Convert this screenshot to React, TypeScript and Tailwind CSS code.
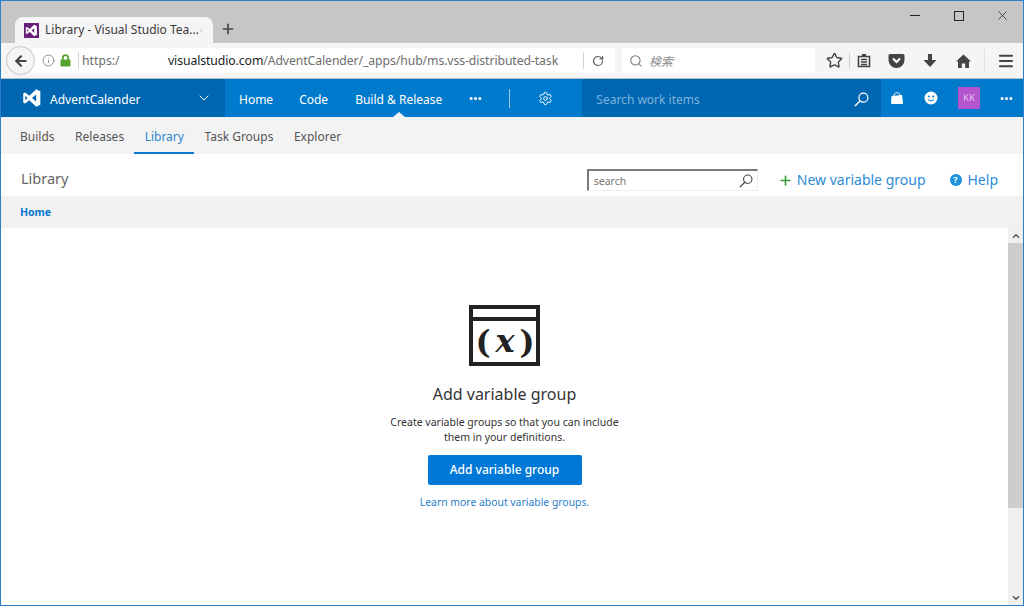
import React from 'react';
import { ArrowLeft, ChevronDown, ChevronUp, Info, Menu, MoreHorizontal, Plus, RotateCw, Search, Settings, Star, X } from 'lucide-react';

const FONT = "font-['Noto_Sans','Open_Sans',sans-serif]";

const VsLogo = ({ size, color }: { size: number; color: string }) => (
  <svg width={size} height={size} viewBox="0 0 24 24">
    <path
      fill={color}
      fillRule="evenodd"
      d="M17 1.500 22 4v16l-5 2.500-8.200-7.900L3.700 18.500 1.500 17.400V6.600l2.200-1.100 5.100 3.900ZM17 7.800l-5 4.200 5 4.200ZM3.900 9.200v5.600L6.600 12Z"
    />
  </svg>
);

// lens top right, long handle to bottom left
const Magnifier = ({ size, color }: { size: number; color: string }) => (
  <svg width={size} height={size} viewBox="0 0 16 16">
    <circle cx="10" cy="6" r="4.800" fill="none" stroke={color} strokeWidth="1.300" />
    <path d="M6.600 9.400 1 15" fill="none" stroke={color} strokeWidth="1.500" />
  </svg>
);

const subTabs = ['Builds', 'Releases', 'Library', 'Task Groups', 'Explorer'];

function BrowserChrome() {
  return (
    <>
      <div className="h-[42px] bg-[#c6c6c6] flex items-end relative">
        <div className="ml-[14px] w-[198px] h-[26px] bg-[#f5f5f5] rounded-t-[8px] flex items-center pl-[9px] pr-[10px]">
          <div className="w-[15px] h-[15px] bg-[#68217a] flex items-center justify-center shrink-0">
            <VsLogo size={13} color="#ffffff" />
          </div>
          <span className="ml-[6px] text-[12px] text-[#3a3a3a] whitespace-nowrap flex-1">Library - Visual Studio Tea...</span>
          <X size={13} strokeWidth={1.2} className="text-[#555]" />
        </div>
        <Plus size={16} strokeWidth={2.4} className="ml-[7px] mb-[6px] text-[#444]" />
        <div className="absolute right-0 top-[7px] flex items-center text-[#222]">
          <div className="w-[10px] h-[1.500px] bg-[#222] mr-[34px]" />
          <div className="w-[10px] h-[10px] border border-[#222] mr-[31px]" />
          <X size={15} strokeWidth={1.2} className="mr-[13px]" />
        </div>
      </div>
      <div className="h-[36px] bg-[#f5f5f5] border-b border-[#bdbdbd] flex items-center">
        <div className="ml-[5px] w-[29px] h-[29px] rounded-full border border-[#c4c4c4] bg-[#f5f5f5] flex items-center justify-center z-10 shrink-0">
          <ArrowLeft size={16} strokeWidth={3.2} className="text-[#444]" />
        </div>
        <div className="-ml-[3px] w-[583px] h-[25px] bg-white flex items-center pl-[10px] shrink-0">
          <Info size={13} strokeWidth={1.5} className="text-[#777]" />
          <svg width="11" height="13" viewBox="0 0 11 13" className="ml-[5px]">
            <path fill="none" stroke="#57a130" strokeWidth="1.800" d="M2.800 6V3.800a2.700 2.700 0 0 1 5.400 0V6" />
            <rect x="0.500" y="5.500" width="10" height="7" rx="1" fill="#57a130" />
          </svg>
          <div className="ml-[7px] w-px h-[17px] bg-[#d4d4d4]" />
          <span className="ml-[3px] pt-[2px] text-[12.250px] text-[#6e6e6e] whitespace-nowrap w-[86px]">https:/</span>
          <span className="pt-[2px] text-[12.250px] text-[#6e6e6e] whitespace-nowrap flex-1 tracking-[-0.1px]">
            <span className="text-[#222]">visualstudio.com</span>/AdventCalender/_apps/hub/ms.vss-distributed-task
          </span>
          <div className="w-px h-[17px] bg-[#d4d4d4]" />
          <RotateCw size={12} strokeWidth={2.4} className="ml-[8px] mr-[11px] text-[#555]" />
        </div>
        <div className="ml-[7px] w-[193px] h-[25px] bg-white flex items-center pl-[7px] shrink-0">
          <Search size={14} strokeWidth={1.8} className="text-[#777]" />
          <span className="ml-[6px] text-[12px] italic text-[#8a8a8a] font-['Noto_Sans_CJK_JP',sans-serif]">検索</span>
        </div>
        <Star size={17} strokeWidth={2} className="ml-[11px] text-[#444]" />
        <div className="ml-[6px] w-px h-[15px] bg-[#ccc]" />
        <svg width="14" height="15" viewBox="0 0 14 15" className="ml-[7px] text-[#444]">
          <path fill="none" stroke="currentColor" strokeWidth="1.600" d="M1.500 3.500h11v10h-11zM4 6.500h6M4 9h6M4 11.500h6" />
          <rect x="5" y="1" width="4" height="3" fill="currentColor" />
        </svg>
        <svg width="17" height="15" viewBox="0 0 17 15" className="ml-[17px]">
          <path fill="#444" d="M2 1h13a1.500 1.500 0 0 1 1.500 1.500V7a8 8 0 0 1-16 0V2.500A1.500 1.500 0 0 1 2 1Z" />
          <path fill="none" stroke="#fff" strokeWidth="2" d="m5 5.500 3.500 3.500L12 5.500" />
        </svg>
        <svg width="14" height="15" viewBox="0 0 14 15" className="ml-[18px]">
          <path fill="#444" d="M5 1h4v6h4.500L7 14 .500 7H5Z" />
        </svg>
        <svg width="15" height="14" viewBox="0 0 15 14" className="ml-[19px]">
          <path fill="#444" d="M7.500.500 15 7.500h-2V14H9.200V9.500H5.800V14H2V7.500H0Z" />
        </svg>
        <div className="ml-[13px] w-px h-[24px] bg-[#e4e4e4]" />
        <Menu size={18} strokeWidth={2.8} className="ml-[12px] text-[#444]" />
      </div>
    </>
  );
}

function TopNav() {
  return (
    <div className="h-[38px] bg-[#007acc] flex items-center text-white text-[12px]">
      <div className="w-[224px] h-full bg-[#0066b1] flex items-center pl-[21px] shrink-0">
        <VsLogo size={20} color="#ffffff" />
        <span className="ml-[8px] pt-[3px] flex-1">AdventCalender</span>
        <ChevronDown size={16} strokeWidth={1.5} className="mr-[13px]" />
      </div>
      <span className="ml-[14px] pt-[3px]">Home</span>
      <span className="ml-[26px] pt-[3px]">Code</span>
      <div className="ml-[27px] h-full flex items-center relative">
        <span className="pt-[3px]">Build &amp; Release</span>
        <div className="absolute bottom-0 left-[38px] w-0 h-0 border-x-[6px] border-x-transparent border-b-[5px] border-b-[#f3f3f3]" />
      </div>
      <MoreHorizontal size={15} strokeWidth={3} className="ml-[26px]" />
      <div className="ml-[26px] w-px h-[19px] bg-[#9ccbe9]" />
      <Settings size={15} strokeWidth={1.6} className="ml-[28px]" />
      <div className="ml-[29px] w-[299px] h-full bg-[#0066b1] flex items-center pl-[14px] pr-[12px] shrink-0">
        <span className="flex-1 pt-[3px] text-[#7db4dc]">Search work items</span>
        <div className="mt-[3px]"><Magnifier size={15} color="#ffffff" /></div>
      </div>
      <svg width="14" height="14" viewBox="0 0 14 14" className="ml-[9px]">
        <path fill="#fff" d="M1.500 5 12 4l1 8a1 1 0 0 1-1 1H2a1 1 0 0 1-1-1Z" />
        <path fill="none" stroke="#fff" strokeWidth="1" d="M3.500 5 5 2.500a1.500 1.500 0 0 1 1.300-.8h1.400a1.500 1.500 0 0 1 1.300.8L10.500 5" />
      </svg>
      <svg width="14" height="14" viewBox="0 0 14 14" className="ml-[20px]">
        <circle cx="7" cy="7" r="6.500" fill="#fff" />
        <circle cx="4.800" cy="5.500" r="1" fill="#007acc" />
        <circle cx="9.200" cy="5.500" r="1" fill="#007acc" />
        <path fill="none" stroke="#007acc" strokeWidth="1" d="M4 8.500c1.500 1.800 4.500 1.800 6 0" />
      </svg>
      <div className="ml-[20px] w-[22px] h-[22px] bg-[#b455cf] flex items-center justify-center text-[9px] text-[#e8c8f0] tracking-[0.5px]">KK</div>
      <MoreHorizontal size={15} strokeWidth={3} className="ml-[19px]" />
    </div>
  );
}

export default function App() {
  return (
    <div className={`w-[1024px] h-[606px] overflow-hidden flex flex-col bg-white border border-[#2e7fca] ${FONT}`}>
      <BrowserChrome />
      <TopNav />
      <div className="h-[37px] bg-[#f3f3f3] flex items-stretch pl-[8.750px] text-[12px] text-[#555]">
        {subTabs.map(t => (
          <div
            key={t}
            className={t === 'Library' ? 'px-[10.250px] pt-[4px] flex items-center border-b-2 border-[#0a78d0] text-[#2a87d0]' : 'px-[10.250px] pt-[4px] flex items-center border-b-2 border-transparent'}
          >
            {t}
          </div>
        ))}
      </div>
      <div className="h-[42px] flex items-center pt-[10px] pl-[20px] pr-[25px]">
        <span className="pb-[2px] text-[14.500px] text-[#666] flex-1">Library</span>
        <div className="w-[171px] h-[22px] border-t-2 border-l-2 border-[#7a7a7a] border-r border-b border-r-[#eee] border-b-[#eee] flex items-center pl-[5px] pr-[4px]">
          <span className="pt-[3px] flex-1 text-[10.500px] text-[#777]">search</span>
          <Magnifier size={14} color="#444444" />
        </div>
        <Plus size={15} strokeWidth={2.4} className="ml-[20px] text-[#2f9a2f]" />
        <span className="ml-[4px] pb-[2px] text-[14px] text-[#2c8bd6]">New variable group</span>
        <div className="ml-[24px] w-[12px] h-[12px] rounded-full bg-[#1c93dc] flex items-center justify-center text-[9px] font-bold text-white">?</div>
        <span className="ml-[6px] pb-[2px] text-[14px] text-[#2c8bd6]">Help</span>
      </div>
      <div className="h-[32px] bg-[#f1f1f1] flex items-center pt-[2px] pl-[19px] text-[10.500px] font-bold text-[#0a78d0]">Home</div>
      <div className="flex-1 flex min-h-0">
        <div className="flex-1 flex flex-col items-center pt-[77px]">
          <svg width="71" height="61" viewBox="0 0 71 61">
            <path fill="none" stroke="#222" strokeWidth="4" d="M2 2h67v57H2z" />
            <path stroke="#222" strokeWidth="4" d="M2 14h67" />
            <g fontFamily="'DejaVu Serif',serif" fontSize="32" fontWeight="bold" fill="#222" textAnchor="middle">
              <text x="14" y="48">(</text>
              <text x="36" y="47" fontStyle="italic">x</text>
              <text x="58" y="48">)</text>
            </g>
          </svg>
          <div className="mt-[16px] text-[16px] text-[#333]">Add variable group</div>
          <div className="mt-[9px] text-[10.500px] leading-[15px] text-[#333] text-center">
            Create variable groups so that you can include<br />them in your definitions.
          </div>
          <button className="mt-[10px] w-[154px] h-[30px] rounded-[2px] bg-[#0078d7] text-white text-[12px] font-medium">Add variable group</button>
          <div className="mt-[10px] text-[10.400px] text-[#2a80c8]">Learn more about variable groups.</div>
        </div>
        <div className="w-[15px] flex flex-col bg-[#efefef] shrink-0">
          <div className="h-[15px] flex items-center justify-center"><ChevronUp size={10} strokeWidth={3.500} className="text-[#555]" /></div>
          <div className="h-[265px] bg-[#cdcdcd]" />
          <div className="flex-1" />
          <div className="h-[15px] flex items-center justify-center"><ChevronDown size={10} strokeWidth={3.500} className="text-[#555]" /></div>
        </div>
      </div>
    </div>
  );
}
